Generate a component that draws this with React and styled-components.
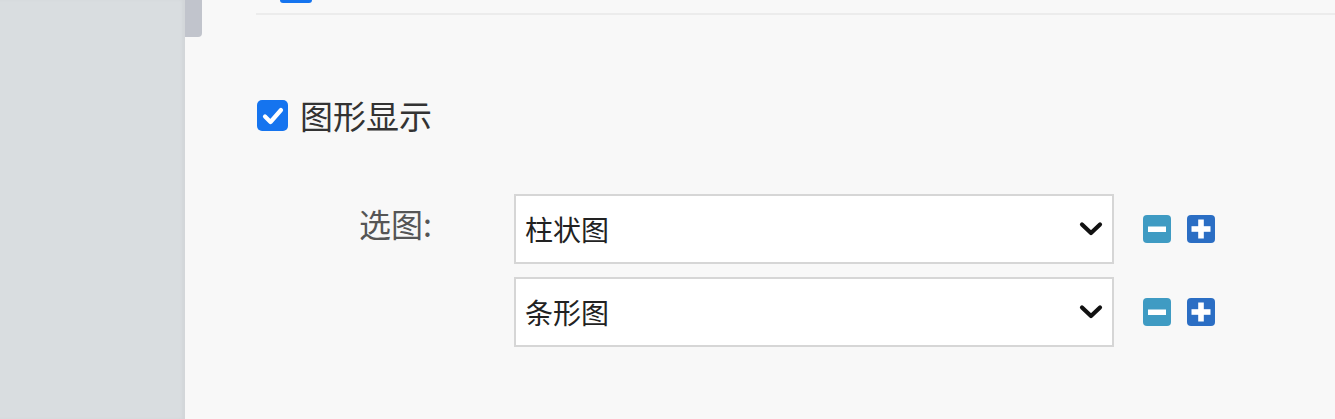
import React from "react";
import styled, { createGlobalStyle } from "styled-components";

const GlobalStyle = createGlobalStyle`
  html, body {
    margin: 0;
    padding: 0;
  }
  body {
    background: #f8f8f8;
    font-family: "Noto Sans CJK SC", "Noto Sans", sans-serif;
    overflow: hidden;
  }
`;

const Page = styled.div`
  display: flex;
  height: 419px;
`;

const Sidebar = styled.aside`
  width: 185px;
  background: #d9dde0;
  box-shadow: inset -3px 0 3px rgba(0, 0, 0, 0.03);
`;

const ScrollTrack = styled.div`
  width: 17px;
`;

const Thumb = styled.div`
  height: 37px;
  background: #c1c4cc;
  border-radius: 0 0 4px 0;
`;

const Main = styled.main`
  flex: 1;
  padding-left: 54px;
`;

const PrevCheck = styled.div`
  margin-left: 24px;
  width: 32px;
  height: 3px;
  background: #1574ef;
  border-radius: 0 0 4px 4px;
`;

const Divider = styled.div`
  margin-top: 10px;
  height: 2px;
  background: #ececec;
`;

const CheckRow = styled.label`
  display: flex;
  align-items: center;
  gap: 12px;
  margin-top: 84px;
  margin-left: 1px;
  font-size: 33px;
  line-height: 1;
  color: #333;
`;

const CheckBox = styled.span`
  display: flex;
  align-items: center;
  justify-content: center;
  width: 31px;
  height: 31px;
  border-radius: 5px;
  background: ${(p) => (p.checked ? "#1574ef" : "#fff")};
`;

const ChartRow = styled.div`
  display: flex;
  align-items: flex-start;
  margin-top: 62px;
`;

const Label = styled.div`
  width: 176px;
  margin-top: 13px;
  margin-right: 82px;
  text-align: right;
  font-size: 32px;
  line-height: 1;
  color: #555;
`;

const SelectList = styled.div`
  display: flex;
  flex-direction: column;
  gap: 13px;
`;

const SelectRow = styled.div`
  display: flex;
  align-items: center;
`;

const SelectBox = styled.div`
  position: relative;
  width: 600px;
  height: 70px;
`;

const Select = styled.select`
  appearance: none;
  box-sizing: border-box;
  width: 100%;
  height: 100%;
  padding: 0 40px 0 9px;
  border: 2px solid #d6d6d6;
  border-radius: 0;
  background: #fff;
  font-family: "Noto Sans CJK SC", "Noto Sans", sans-serif;
  font-size: 28px;
  color: #222;
  outline: none;
`;

const Chevron = styled.svg`
  position: absolute;
  right: 11px;
  top: 50%;
  transform: translateY(-50%);
  pointer-events: none;
`;

const Buttons = styled.div`
  display: flex;
  gap: 16px;
  margin-left: 29px;
`;

const IconButton = styled.button`
  display: flex;
  align-items: center;
  justify-content: center;
  width: 28px;
  height: 28px;
  padding: 0;
  border: none;
  border-radius: 4px;
  background: ${(p) => (p.variant === "add" ? "#2b6ec4" : "#3f9bc3")};
  cursor: pointer;
`;

const options = ["柱状图", "条形图", "折线图", "饼图"];

function ChartSelect({ value }) {
  return (
    <SelectRow>
      <SelectBox>
        <Select defaultValue={value}>
          {options.map((o) => (
            <option key={o}>{o}</option>
          ))}
        </Select>
        <Chevron width="24" height="16" viewBox="0 0 24 16">
          <path
            d="M3 3.5 L12 12 L21 3.5"
            fill="none"
            stroke="#111"
            strokeWidth="4.2"
            strokeLinecap="round"
            strokeLinejoin="round"
          />
        </Chevron>
      </SelectBox>
      <Buttons>
        <IconButton variant="remove" aria-label="删除">
          <svg width="20" height="20" viewBox="0 0 20 20">
            <rect x="1" y="7.5" width="18" height="5.5" fill="#fff" />
          </svg>
        </IconButton>
        <IconButton variant="add" aria-label="添加">
          <svg width="20" height="20" viewBox="0 0 20 20">
            <rect x="0.5" y="7.2" width="19" height="5.6" fill="#fff" />
            <rect x="7.2" y="0.5" width="5.6" height="19" fill="#fff" />
          </svg>
        </IconButton>
      </Buttons>
    </SelectRow>
  );
}

export default function App() {
  return (
    <>
      <GlobalStyle />
      <Page>
        <Sidebar />
        <ScrollTrack>
          <Thumb />
        </ScrollTrack>
        <Main>
          <PrevCheck />
          <Divider />
          <CheckRow>
            <CheckBox checked>
              <svg width="26" height="26" viewBox="0 0 26 26">
                <path
                  d="M5 13.5 L10.5 19 L21 7"
                  fill="none"
                  stroke="#fff"
                  strokeWidth="4.2"
                  strokeLinecap="round"
                  strokeLinejoin="round"
                />
              </svg>
            </CheckBox>
            图形显示
          </CheckRow>
          <ChartRow>
            <Label>选图:</Label>
            <SelectList>
              <ChartSelect value="柱状图" />
              <ChartSelect value="条形图" />
            </SelectList>
          </ChartRow>
        </Main>
      </Page>
    </>
  );
}
